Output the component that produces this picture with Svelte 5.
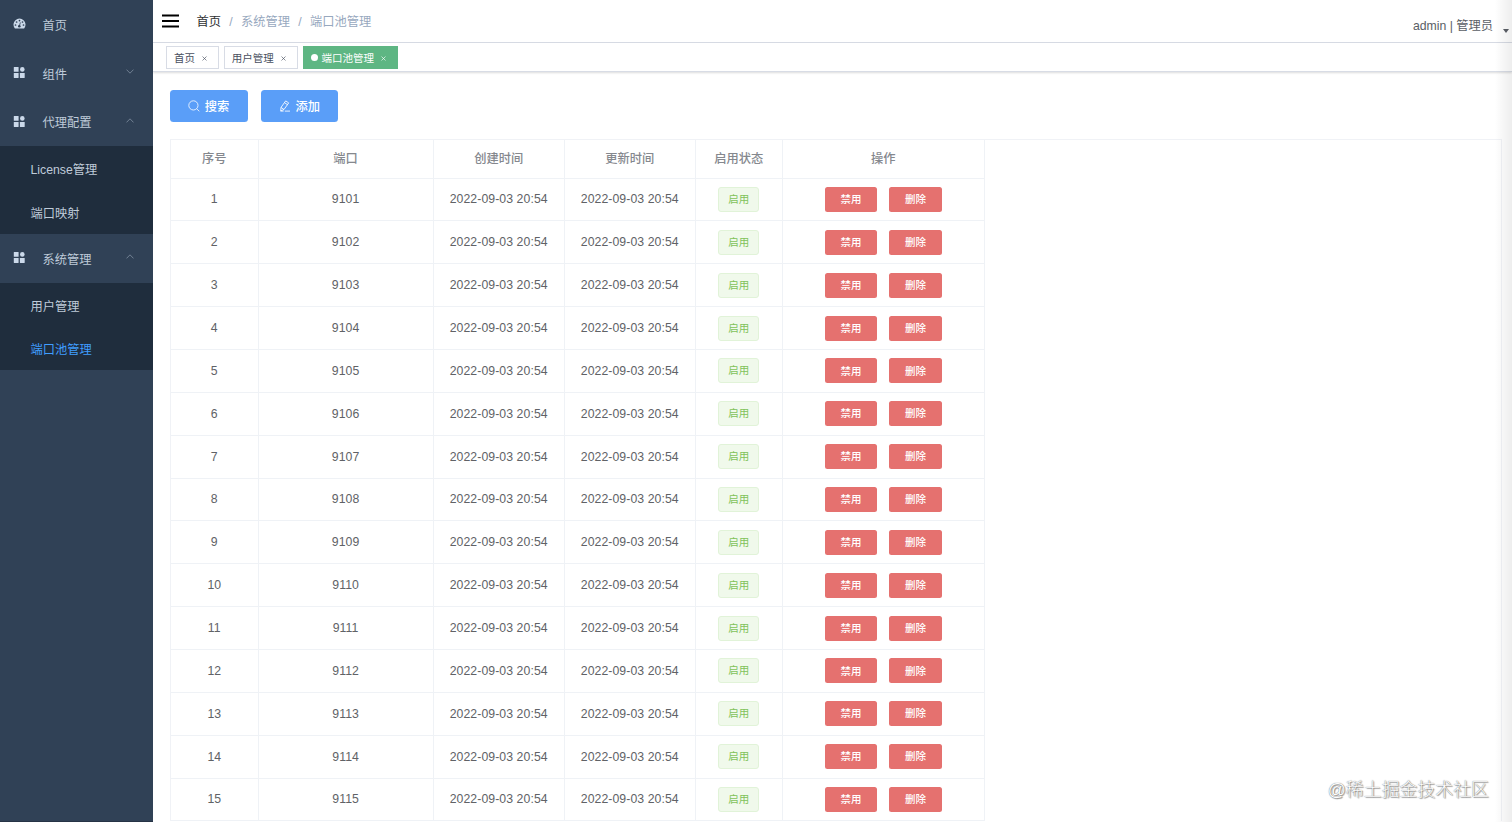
<script>
  const menus = [
    { title: '首页', icon: 'dashboard', arrow: '' },
    { title: '组件', icon: 'component', arrow: 'down' },
    { title: '代理配置', icon: 'component', arrow: 'up', children: ['License管理', '端口映射'] },
    { title: '系统管理', icon: 'component', arrow: 'up', children: ['用户管理', '端口池管理'] }
  ];
  const tags = ['首页', '用户管理', '端口池管理'];
  const columns = ['序号', '端口', '创建时间', '更新时间', '启用状态', '操作'];
  const active = '端口池管理';

  let rows = [];
  for (let i = 1; i <= 15; i++) {
    rows.push({ id: i, port: 9100 + i, createTime: '2022-09-03 20:54', updateTime: '2022-09-03 20:54' });
  }
</script>

<div class="app">
  <aside class="sidebar">
    {#each menus as menu}
      <div class="menu-item">
        {#if menu.icon == 'dashboard'}
          <svg class="menu-icon" viewBox="0 0 13 13">
            <path d="M1.7 11.2A6 6 0 1 1 11.3 11.2Q11 11.5 10.6 11.5H2.4Q2 11.5 1.7 11.2Z" fill="#cbd9ea" />
            <g fill="#304156">
              <circle cx="2.5" cy="8" r=".85" />
              <circle cx="3.6" cy="5" r=".85" />
              <circle cx="6.5" cy="3.6" r=".85" />
              <circle cx="9.5" cy="5" r=".85" />
              <circle cx="10.5" cy="8" r=".85" />
              <circle cx="6.3" cy="9.2" r="1.3" />
            </g>
            <path d="M6.4 9 7.4 5.4" stroke="#304156" stroke-width=".8" />
          </svg>
        {:else}
          <svg class="menu-icon" viewBox="0 0 13 13" fill="#cbd9ea">
            <rect x=".8" y="1" width="4.8" height="4.8" rx=".3" />
            <circle cx="9.3" cy="3.4" r="2.3" />
            <rect x=".8" y="7.1" width="4.8" height="4.8" rx=".3" />
            <rect x="6.9" y="7.1" width="4.8" height="4.8" rx=".3" />
          </svg>
        {/if}
        <span class="menu-title">{menu.title}</span>
        {#if menu.arrow}
          <svg class="arrow {menu.arrow}" viewBox="0 0 8 5"><path d="M.5.6 4 4.2 7.5.6" fill="none" stroke="#8290a2" stroke-width=".8" /></svg>
        {/if}
      </div>
      {#if menu.children}
        <div class="submenu">
          {#each menu.children as child}
            <div class="submenu-item" class:active={child == active}>{child}</div>
          {/each}
        </div>
      {/if}
    {/each}
  </aside>

  <div class="main">
    <header class="navbar">
      <svg class="hamburger" viewBox="0 0 18 14"><path d="M.5 1.5h17M.5 7h17M.5 12.5h17" stroke="#000" stroke-width="1.9" /></svg>
      <div class="breadcrumb">
        <span class="home">首页</span><i>/</i><span>系统管理</span><i>/</i><span>端口池管理</span>
      </div>
      <div class="user">admin | 管理员</div>
      <div class="caret"></div>
    </header>

    <nav class="tags">
      {#each tags as tag}
        <span class="tag" class:active={tag == active}>
          {#if tag == active}<b class="dot"></b>{/if}
          {tag}
          <svg class="close" viewBox="0 0 5 5"><path d="M.5.5l4 4M4.5.5l-4 4" stroke="currentColor" stroke-width=".65" /></svg>
        </span>
      {/each}
    </nav>

    <section class="content">
      <div class="filter">
        <button class="primary">
          <svg viewBox="0 0 12 12" fill="none" stroke="#fff" stroke-width=".8"><circle cx="5.4" cy="5.4" r="4.6" /><path d="M8.7 8.8 11.3 11.3" /></svg>
          搜索
        </button>
        <button class="primary">
          <svg viewBox="0 0 12 12" fill="none" stroke="#fff" stroke-width=".85" stroke-linejoin="round"><path d="M6.7.9 9.7 2.9 5 9.5 1.7 10.9 2 7.4ZM5.5 2.7 8.5 4.7M2 7.4 5 9.5M1.6 11.1h3M5.8 11.1h5.2" /></svg>
          添加
        </button>
      </div>

      <div class="table-wrap">
        <table>
          <colgroup>
            <col class="c-id" /><col class="c-port" /><col class="c-time" /><col class="c-time" /><col class="c-state" /><col class="c-action" />
          </colgroup>
          <thead>
            <tr>
              {#each columns as column}
                <th>{column}</th>
              {/each}
            </tr>
          </thead>
          <tbody>
            {#each rows as row}
              <tr>
                <td>{row.id}</td>
                <td>{row.port}</td>
                <td>{row.createTime}</td>
                <td>{row.updateTime}</td>
                <td><span class="state">启用</span></td>
                <td>
                  <div class="actions">
                    <button class="danger">禁用</button>
                    <button class="danger">删除</button>
                  </div>
                </td>
              </tr>
            {/each}
          </tbody>
        </table>
      </div>
    </section>
  </div>

  <div class="edge"></div>
  <div class="watermark">@稀土掘金技术社区</div>
</div>

<style>
:global(body) {
  overflow: hidden;
}
.app {
  position: relative;
  display: flex;
  height: 822px;
  overflow: hidden;
  background: #fff;
  color: #606266;
  font-family: "Liberation Sans", "Noto Sans CJK SC", sans-serif;
  font-size: 12.25px;
}
button {
  font-family: inherit;
  border: none;
  padding: 0;
}

/* sidebar */
.sidebar {
  box-sizing: border-box;
  flex: none;
  width: 153px;
  background: #304156;
  border-bottom: 1px solid #263345;
  color: #bfcbd9;
}
.menu-item {
  display: flex;
  align-items: center;
  height: 48.75px;
  padding: 0 19px 0 13px;
}
.menu-icon {
  width: 13px;
  height: 13px;
  margin-top: -1px;
}
.menu-title {
  flex: 1;
  margin: 1px 0 0 16.5px;
}
.arrow {
  width: 8px;
  height: 5px;
  margin-top: -3px;
}
.arrow.up {
  transform: rotate(180deg);
}
.submenu {
  background: #1f2d3d;
}
.submenu-item {
  height: 43.75px;
  line-height: 48px;
  padding-left: 30.5px;
}
.submenu-item.active {
  color: #409eff;
}

/* top bar */
.main {
  flex: 1;
  min-width: 0;
}
.navbar {
  box-sizing: border-box;
  display: flex;
  align-items: center;
  height: 43px;
  padding: 0 3px 0 8px;
  border-bottom: 1px solid #d8dce5;
}
.hamburger {
  width: 19px;
  height: 14px;
  margin-top: -1px;
}
.breadcrumb {
  margin-left: 16.5px;
  color: #97a8be;
}
.breadcrumb i {
  margin: 0 8.3px;
  font-style: normal;
}
.breadcrumb .home {
  color: #303133;
}
.user {
  margin: 7px 10px 0 auto;
  color: #5a5e66;
}
.caret {
  margin-top: 19px;
  border: 3px solid transparent;
  border-top: 4px solid #5a5e66;
  border-bottom: none;
}
.tags {
  box-sizing: border-box;
  display: flex;
  gap: 4.5px;
  height: 29px;
  padding: 3px 13px 0;
  border-bottom: 1px solid #d8dce5;
  box-shadow: 0 1px 2px rgba(0, 0, 0, .14);
}
.tag {
  box-sizing: border-box;
  display: flex;
  align-items: center;
  height: 23px;
  padding: 0 11px 0 7px;
  border: 1px solid #d8dce5;
  color: #495060;
  font-size: 10.5px;
}
.tag.active {
  background: #5eb683;
  border-color: #5eb683;
  color: #fff;
}
.dot {
  width: 7px;
  height: 7px;
  margin-right: 4px;
  border-radius: 50%;
  background: #fff;
}
.close {
  width: 5px;
  height: 5px;
  margin: 2px 0 0 7.3px;
}

/* table */
.content {
  padding: 18px 10px 0 17px;
}
.filter {
  display: flex;
  gap: 13px;
  margin-bottom: 17px;
}
.primary {
  display: flex;
  align-items: center;
  justify-content: center;
  gap: 4.5px;
  width: 77.7px;
  height: 32px;
  border-radius: 3.5px;
  background: #5a9ef8;
  color: #fff;
  font-size: 12.25px;
  font-weight: 500;
}
.primary svg {
  width: 12px;
  height: 12px;
}
.table-wrap {
  border: 1px solid #f0f2f6;
  border-bottom: none;
}
table {
  width: 813.5px;
  table-layout: fixed;
  border-collapse: separate;
  border-spacing: 0;
}
.c-id { width: 87.5px; }
.c-port { width: 175px; }
.c-time { width: 131px; }
.c-state { width: 87px; }
.c-action { width: 201.5px; }
th, td {
  box-sizing: border-box;
  padding: 0;
  border-right: 1px solid #eff2f6;
  border-bottom: 1px solid #eff2f6;
  text-align: center;
  vertical-align: middle;
}
th {
  height: 38.5px;
  padding-bottom: 1px;
  color: #85888e;
  font-weight: 500;
}
td {
  height: 42.86px;
  letter-spacing: .08px;
}
.state {
  box-sizing: border-box;
  display: block;
  width: 41px;
  height: 25px;
  margin: 0 auto;
  border: 1px solid #e1f3d8;
  border-radius: 3px;
  background: #f0f9eb;
  color: #7fc25a;
  font-size: 10.5px;
  line-height: 22.5px;
}
.actions {
  display: flex;
  justify-content: center;
  gap: 12px;
}
.danger {
  width: 52.5px;
  height: 25px;
  padding-bottom: 1.5px;
  border-radius: 2.5px;
  background: #e5716f;
  color: #fff;
  font-size: 10.5px;
  font-weight: 500;
}

/* overlays */
.edge {
  position: absolute;
  top: 0;
  right: 0;
  width: 17px;
  height: 100%;
  background: linear-gradient(to right, rgba(0, 0, 0, 0), rgba(0, 0, 0, .07));
}
.watermark {
  position: absolute;
  right: 23px;
  bottom: 21px;
  color: #fdfdfd;
  font-size: 17.9px;
  font-weight: 300;
  text-shadow: 0 0 1px #555, 1px 1px 1px #999;
}
</style>
